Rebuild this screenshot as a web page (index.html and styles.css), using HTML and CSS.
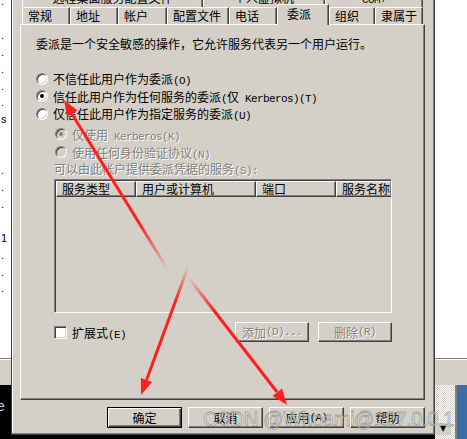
FILE: index.html
```html
<!DOCTYPE html>
<html lang="zh-CN">
<head>
<meta charset="utf-8">
<title>属性</title>
<link rel="stylesheet" href="styles.css">
</head>
<body>
<div class="screen">
  <div class="bg-left">
    <div class="bg-left-text">
      <div>.</div><div>&nbsp;</div><div>.</div><div>.</div><div>.</div><div>.</div><div>.</div><div>s</div><div>&nbsp;</div><div>&nbsp;</div><div>.</div><div>.</div><div>.</div><div>&nbsp;</div><div>1</div><div>.</div><div>.</div><div>.</div>
    </div>
    <div class="bg-band"></div>
    <div class="bg-left-black"><span class="bg-e">e</span></div>
  </div>

  <div class="dialog">
    <div class="tabs-top">
      <div class="ttab ttab-1">远程桌面服务配置文件</div>
      <div class="ttab ttab-2">个人虚拟机</div>
      <div class="ttab ttab-3"><span class="lt">COM+</span></div>
    </div>
    <div class="tabs">
      <div class="tab w48">常规</div>
      <div class="tab w48">地址</div>
      <div class="tab w49">帐户</div>
      <div class="tab w62">配置文件</div>
      <div class="tab w48">电话</div>
      <div class="tab sel">委派</div>
      <div class="tab w46">组织</div>
      <div class="tab w48">隶属于</div>
    </div>
    <div class="panel">
      <p class="desc">委派是一个安全敏感的操作，它允许服务代表另一个用户运行。</p>
      <div class="radios">
        <div class="radio-row"><span class="radio"></span><span>不信任此用户作为委派<span class="lt">(O)</span></span></div>
        <div class="radio-row"><span class="radio on"></span><span>信任此用户作为任何服务的委派<span class="lt">(</span>仅<span class="lt"> Kerberos)(T)</span></span></div>
        <div class="radio-row"><span class="radio"></span><span>仅信任此用户作为指定服务的委派<span class="lt">(U)</span></span></div>
      </div>
      <div class="subradios">
        <div class="radio-row sub"><span class="radio off on"></span><span class="dis">仅使用<span class="lt"> Kerberos(K)</span></span></div>
        <div class="radio-row sub"><span class="radio off"></span><span class="dis">使用任何身份验证协议<span class="lt">(N)</span></span></div>
      </div>
      <div class="list-label dis">可以由此帐户提供委派凭据的服务<span class="lt">(S):</span></div>
      <div class="list">
        <div class="lhead">
          <div class="lcol c1">服务类型</div>
          <div class="lcol c2">用户或计算机</div>
          <div class="lcol c3">端口</div>
          <div class="lcol c4">服务名称</div>
        </div>
      </div>
      <div class="check-row">
        <label class="check"><span class="box"></span><span>扩展式<span class="lt">(E)</span></span></label>
        <div class="list-btns">
          <div class="btn dis">添加<span class="lt">(D)...</span></div>
          <div class="btn dis">删除<span class="lt">(R)</span></div>
        </div>
      </div>
    </div>
    <div class="buttons">
      <div class="btn default">确定</div>
      <div class="btn">取消</div>
      <div class="btn">应用<span class="lt">(A)</span></div>
      <div class="btn">帮助</div>
    </div>
  </div>

  <div class="bg-right">
    <div class="bg-right-white"></div>
    <div class="bg-band"></div>
    <div class="bg-right-bottom">
      <div class="checker"><span class="scroll-btn">▼</span></div>
      <div class="blue"></div>
    </div>
  </div>
</div>

<svg class="arrows" width="467" height="439" viewBox="0 0 467 439" xmlns="http://www.w3.org/2000/svg">
  <defs>
    <linearGradient id="g1" gradientUnits="userSpaceOnUse" x1="168" y1="270" x2="72" y2="114">
      <stop offset="0" stop-color="#ff1f1f" stop-opacity="0"/>
      <stop offset="0.3" stop-color="#ff1f1f" stop-opacity="1"/>
      <stop offset="1" stop-color="#ff1f1f" stop-opacity="1"/>
    </linearGradient>
    <linearGradient id="g2" gradientUnits="userSpaceOnUse" x1="188" y1="277" x2="277" y2="392">
      <stop offset="0" stop-color="#ff1f1f" stop-opacity="0"/>
      <stop offset="0.3" stop-color="#ff1f1f" stop-opacity="1"/>
      <stop offset="1" stop-color="#ff1f1f" stop-opacity="1"/>
    </linearGradient>
    <linearGradient id="g3" gradientUnits="userSpaceOnUse" x1="188" y1="267" x2="146" y2="380">
      <stop offset="0" stop-color="#ff1f1f" stop-opacity="0"/>
      <stop offset="0.3" stop-color="#ff1f1f" stop-opacity="1"/>
      <stop offset="1" stop-color="#ff1f1f" stop-opacity="1"/>
    </linearGradient>
  </defs>
  <line x1="168" y1="270" x2="72" y2="114" stroke="url(#g1)" stroke-width="3"/>
  <polygon points="64,100 77.5,110.5 67.2,116.8" fill="#ff1f1f"/>
  <line x1="188" y1="277" x2="277" y2="392" stroke="url(#g2)" stroke-width="3"/>
  <polygon points="287,405 282,388.6 272.5,396" fill="#ff1f1f"/>
  <line x1="188" y1="267" x2="146.5" y2="380" stroke="url(#g3)" stroke-width="3"/>
  <polygon points="141,395 152.1,382.1 140.9,377.9" fill="#ff1f1f"/>
</svg>

<div class="watermark">CSDN @Whoami@127.0.0.1</div>
</body>
</html>
```

FILE: styles.css
```css
* { box-sizing: border-box; }
html, body { margin: 0; padding: 0; }
body {
  width: 467px;
  height: 439px;
  overflow: hidden;
  background: #000;
  color: #000;
  font-family: "Noto Sans CJK SC", sans-serif;
  font-size: 12px;
  position: relative;
}
p { margin: 0; }

.lt {
  font-family: "Liberation Mono", monospace;
  font-size: 11px;
  letter-spacing: -0.6px;
}

.screen { display: flex; height: 439px; }

/* background windows */
.bg-left { width: 11px; display: flex; flex-direction: column; }
.bg-left-text {
  height: 358px;
  background: #fff;
  font-family: "Liberation Sans", sans-serif;
  font-size: 11px;
  line-height: 16.9px;
  padding: 0 0 0 1px;
  overflow: hidden;
}
.bg-left-text div { margin-top: 0; }
.bg-left-text div:first-child { margin-top: -7px; }
.bg-band {
  height: 27px;
  background: #d4d0c8;
  border-top: 1px solid #808080;
  box-shadow: inset 0 1px #fff;
}
.bg-left-black { flex: 1; background: #000; padding-top: 12px; overflow: hidden; }
.bg-e { color: #b8cce8; font-family: "Liberation Sans", sans-serif; font-size: 14px; margin-left: -3px; }

.bg-right { flex: 1; display: flex; flex-direction: column; }
.bg-right-white { height: 358px; background: #fff; }
.bg-right-bottom { flex: 1; display: flex; }
.checker {
  width: 20px;
  background-color: #d4d0c8;
  background-image: repeating-conic-gradient(#ffffff 0 25%, #d4d0c8 0 50%);
  background-size: 2px 2px;
  display: flex;
  align-items: flex-end;
  padding-bottom: 4px;
}
.scroll-btn {
  width: 16px;
  height: 12px;
  background: #d4d0c8;
  font-size: 8px;
  line-height: 12px;
  text-align: center;
  color: #000;
  font-family: "DejaVu Sans", sans-serif;
}
.blue { flex: 1; background: #3a6ea5; border-left: 2px solid #808080; }

/* dialog */
.dialog {
  width: 424px;
  height: 435px;
  background: #d4d0c8;
  border-left: 1px solid #404040;
  border-right: 1px solid #404040;
  border-bottom: 1px solid #404040;
  box-shadow: inset -1px -1px #808080, inset 1px 0 #fff;
  padding: 0 9px 0 8px;
  display: flex;
  flex-direction: column;
}

.tabs-top {
  display: flex;
  height: 17px;
  margin-top: -10px;
  padding-left: 2px;
}
.ttab {
  height: 17px;
  line-height: 15px;
  text-align: center;
  border-left: 1px solid #fff;
  border-right: 1px solid #404040;
  box-shadow: inset -1px 0 #808080;
}
.ttab-1 { width: 181px; }
.ttab-2 { width: 122px; }
.ttab-3 { width: 98px; }

.tabs {
  display: flex;
  align-items: flex-end;
  height: 20px;
  margin-top: -3px;
  padding-left: 2px;
  position: relative;
  z-index: 1;
}
.tab {
  height: 17px;
  border-top: 1px solid #fff;
  border-left: 1px solid #fff;
  border-right: 1px solid #404040;
  box-shadow: inset -1px 0 #808080;
  border-top-left-radius: 2px;
  padding-left: 5px;
  line-height: 16px;
  background: #d4d0c8;
}
.w46 { width: 46px; }
.w48 { width: 48px; }
.w49 { width: 49px; }
.w62 { width: 62px; }
.tab.sel {
  width: 52px;
  height: 21px;
  margin-bottom: -1px;
  padding-left: 9px;
  line-height: 18px;
}

.panel {
  height: 376px;
  border: 1px solid;
  border-color: #fff #404040 #404040 #fff;
  box-shadow: inset -1px -1px #808080;
  padding: 10px 0 0 15px;
}
.desc { line-height: 17px; }

.radios { margin-top: 18px; }
.radio-row {
  display: flex;
  align-items: center;
  gap: 5px;
  height: 17.5px;
}
.subradios { margin-top: 2.5px; padding-left: 19px; }
.radio-row.sub { height: 18px; }
.radio {
  width: 12px;
  height: 12px;
  border-radius: 50%;
  border: 1px solid;
  border-color: #808080 #fff #fff #808080;
  box-shadow: inset 1px 1px #404040, inset -1px -1px #d4d0c8;
  background: #fff;
  display: flex;
  align-items: center;
  justify-content: center;
  flex: none;
}
.radio.on::after {
  content: "";
  width: 4px;
  height: 4px;
  border-radius: 50%;
  background: #000;
}
.radio.off { background: #d4d0c8; }
.radio.off.on::after { background: #808080; }

.dis { color: #808080; text-shadow: 1px 1px 0 #fff; }

.list-label { padding-left: 18px; line-height: 16px; }

.list {
  margin-left: 18px;
  width: 338px;
  height: 134px;
  border: 1px solid;
  border-color: #808080 #fff #fff #808080;
  box-shadow: inset 1px 1px #404040;
  padding: 1px 0 0 1px;
  background: #d4d0c8;
  overflow: hidden;
}
.lhead { display: flex; height: 16px; }
.lcol {
  height: 16px;
  border: 1px solid;
  border-color: #fff #404040 #404040 #fff;
  box-shadow: inset -1px -1px #808080;
  padding-left: 5px;
  line-height: 14px;
  white-space: nowrap;
  overflow: hidden;
  flex: none;
}
.c1 { width: 80px; }
.c2 { width: 120px; }
.c3 { width: 80px; }
.c4 { width: 56px; }

.check-row {
  margin: 9px 0 0 18px;
  width: 338px;
  display: flex;
  align-items: flex-start;
  justify-content: space-between;
}
.check { display: flex; align-items: center; gap: 5px; height: 18px; margin-top: 1px; }
.box {
  width: 13px;
  height: 13px;
  border: 1px solid;
  border-color: #808080 #fff #fff #808080;
  box-shadow: inset 1px 1px #404040, inset -1px -1px #d4d0c8;
  background: #fff;
}
.list-btns { display: flex; gap: 9px; }

.btn {
  width: 75px;
  height: 20px;
  border: 1px solid;
  border-color: #fff #404040 #404040 #fff;
  box-shadow: inset -1px -1px #808080;
  background: #d4d0c8;
  display: flex;
  align-items: center;
  justify-content: center;
  white-space: nowrap;
}
.list-btns .btn { width: 74px; height: 20px; }
.buttons {
  display: flex;
  justify-content: flex-end;
  gap: 6px;
  margin-top: 7px;
}
.buttons .btn { height: 21px; }
.btn.default {
  border-color: #000;
  box-shadow: inset 1px 1px #fff, inset -1px -1px #404040, inset -2px -2px #808080;
}

.arrows { position: absolute; left: 0; top: 0; pointer-events: none; }

.watermark {
  position: absolute;
  left: 203px;
  top: 408px;
  font-family: "Liberation Sans", sans-serif;
  font-size: 20px;
  letter-spacing: -0.4px;
  color: rgba(255, 255, 255, 0.55);
  -webkit-text-stroke: 0.8px rgba(100, 100, 100, 0.55);
  white-space: nowrap;
  pointer-events: none;
}
```
